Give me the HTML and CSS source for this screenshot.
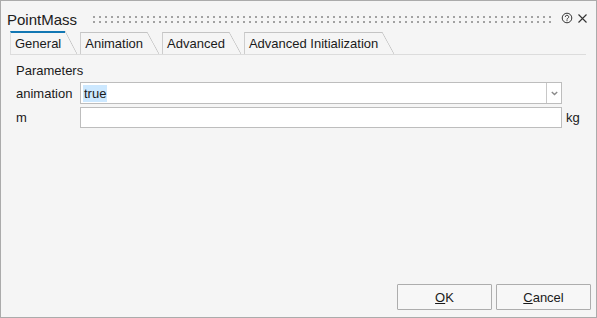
FILE: index.html
```html
<!DOCTYPE html>
<html>
<head>
<meta charset="utf-8">
<link rel="stylesheet" href="styles.css">
</head>
<body>
<div class="window">
  <div class="titlebar">
    <span class="title">PointMass</span>
    <span class="grip"></span>
    <svg class="help" width="12" height="12" viewBox="0 0 12 12">
      <circle cx="6" cy="6" r="4.8" fill="none" stroke="#333" stroke-width="1"/>
      <path d="M4.3 4.9 a1.7 1.6 0 1 1 2.5 1.4 c-0.6 0.3 -0.8 0.6 -0.8 1.3" fill="none" stroke="#333" stroke-width="1"/>
      <rect x="5.5" y="8.2" width="1" height="1" fill="#333"/>
    </svg>
    <svg class="close" width="9" height="9" viewBox="0 0 9 9">
      <path d="M0.5 0.5 L8.5 8.5 M8.5 0.5 L0.5 8.5" stroke="#333" stroke-width="1.1" fill="none"/>
    </svg>
  </div>
  <div class="tabs">
    <div class="tab active"><span class="tab-label">General</span></div>
    <div class="tab"><span class="tab-label">Animation</span></div>
    <div class="tab"><span class="tab-label">Advanced</span></div>
    <div class="tab"><span class="tab-label">Advanced Initialization</span></div>
  </div>
  <div class="panel">
    <div class="section">Parameters</div>
    <div class="grid">
      <span class="label">animation</span>
      <div class="combo">
        <span class="value"><span class="sel">true</span></span>
        <span class="drop">
          <svg width="7" height="5" viewBox="0 0 7 5"><path d="M0.8 1 L3.5 3.6 L6.2 1" fill="none" stroke="#8a8a8a" stroke-width="1.4"/></svg>
        </span>
      </div>
      <span></span>
      <span class="label">m</span>
      <div class="field"></div>
      <span class="unit">kg</span>
    </div>
  </div>
  <div class="footer">
    <button class="btn"><u>O</u>K</button>
    <button class="btn"><u>C</u>ancel</button>
  </div>
</div>
</body>
</html>
```
FILE: styles.css
```css
html, body {
  margin: 0;
  padding: 0;
  background: #f5f5f5;
}

.window {
  width: 597px;
  height: 318px;
  box-sizing: border-box;
  border: 1px solid #ababab;
  background: #f5f5f5;
  display: flex;
  flex-direction: column;
  font-family: "Liberation Sans", Arial, sans-serif;
  font-size: 13px;
  color: #1a1a1a;
}

.titlebar {
  height: 30px;
  box-sizing: border-box;
  padding: 10px 9px 0 6px;
  display: flex;
  align-items: flex-start;
}

.title {
  font-size: 15px;
  line-height: 17px;
  color: #202020;
}

.grip {
  flex: 1;
  height: 7px;
  margin: 5px 8px 0 16px;
  background-image:
    linear-gradient(90deg, #a2a2a2 2px, transparent 2px),
    linear-gradient(90deg, #a2a2a2 2px, transparent 2px);
  background-size: 6px 2px, 6px 2px;
  background-position: 0 0, 0 5px;
  background-repeat: repeat-x;
}

.help {
  margin-top: 1px;
  flex: none;
}

.close {
  margin: 3px 0 0 5px;
  flex: none;
}

.tabs {
  display: flex;
  height: 23px;
  margin: 0 10px 0 9px;
  border-bottom: 1px solid #dcdcdc;
}

.tab {
  display: flex;
  margin-top: 1px;
  margin-right: 3px;
}

.tab::after {
  content: "";
  width: 12px;
  flex: none;
  background: linear-gradient(to top right, transparent calc(50% - 0.7px), #c4c4c4 50%, transparent calc(50% + 0.7px));
}

.tab-label {
  border-left: 1px solid #cdcdcd;
  border-top: 1px solid #c4c4c4;
  padding: 0 4px 0 4px;
  line-height: 21px;
  white-space: nowrap;
}

.tab.active {
  margin-top: 0;
}

.tab.active .tab-label {
  border-top: 2px solid #1277b3;
  border-left-color: #dedede;
}

.panel {
  flex: 1;
  padding: 8px 0 0 15px;
}

.section {
  line-height: 15px;
  margin-bottom: 4px;
}

.grid {
  display: grid;
  grid-template-columns: 64px 482px auto;
  row-gap: 3px;
  align-items: center;
}

.label {
  line-height: 15px;
}

.combo {
  height: 22px;
  box-sizing: border-box;
  border: 1px solid #bdbdbd;
  background: #fff;
  display: flex;
  align-items: center;
}

.value {
  flex: 1;
  padding-left: 2px;
  display: flex;
  align-items: center;
}

.sel {
  background: #cce8ff;
  padding: 0 1px;
  line-height: 17px;
}

.drop {
  width: 14px;
  align-self: stretch;
  border-left: 1px solid #c8c8c8;
  display: flex;
  align-items: center;
  justify-content: center;
}

.field {
  height: 21px;
  box-sizing: border-box;
  border: 1px solid #bdbdbd;
  background: #fff;
}

.unit {
  margin-left: 4px;
  line-height: 15px;
}

.footer {
  display: flex;
  justify-content: flex-end;
  gap: 4px;
  padding: 0 5px 7px 0;
}

.btn {
  width: 95px;
  height: 26px;
  box-sizing: border-box;
  border: 1px solid #adadad;
  border-radius: 1px;
  background: #f7f7f7;
  font-family: "Liberation Sans", Arial, sans-serif;
  font-size: 13px;
  color: #1a1a1a;
  padding: 0;
}
```
